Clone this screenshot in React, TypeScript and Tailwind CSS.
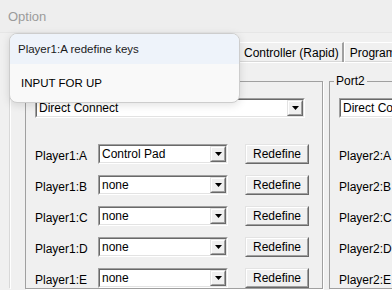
const ui = "font-['Liberation_Sans',Arial,sans-serif] text-[12px] leading-[14px] text-black"

function Arrow() {
  return (
    <div className="h-full w-[16px] shrink-0 border border-t-[#e3e3e3] border-l-[#e3e3e3] border-r-[#696969] border-b-[#696969]">
      <div className="flex h-full w-full items-center justify-center border border-t-white border-l-white border-r-[#a0a0a0] border-b-[#a0a0a0] bg-[#f0f0f0]">
        <svg width="7" height="4" viewBox="0 0 7 4">
          <polygon points="0,0 7,0 3.5,4" fill="#000" />
        </svg>
      </div>
    </div>
  )
}

function Combo({ value, className }: { value: string; className: string }) {
  return (
    <div className={`flex h-5 shrink-0 border border-t-[#a0a0a0] border-l-[#a0a0a0] border-r-white border-b-white ${className}`}>
      <div className="flex min-w-0 flex-1 items-center border border-t-[#696969] border-l-[#696969] border-r-[#e3e3e3] border-b-[#e3e3e3] bg-white">
        <span className="flex-1 truncate pl-[2px]">{value}</span>
        <Arrow />
      </div>
    </div>
  )
}

function Button({ label }: { label: string }) {
  return (
    <div className="h-5 w-16 shrink-0 border border-t-[#e3e3e3] border-l-[#e3e3e3] border-r-[#696969] border-b-[#696969]">
      <div className="flex h-full w-full items-center justify-center border border-t-white border-l-white border-r-[#a0a0a0] border-b-[#a0a0a0] bg-[#f0f0f0]">
        {label}
      </div>
    </div>
  )
}

function Port({ n }: { n: number }) {
  const rows = ["A", "B", "C", "D", "E"]
  return (
    <fieldset className="w-[298px] shrink-0 border border-[#a0a0a0] pl-[9px] pt-[10px] shadow-[1px_1px_0_#fff]">
      <legend className={`-ml-[5px] px-[2px] ${n === 1 ? "invisible" : ""}`}>Port{n}</legend>
      <Combo value="Direct Connect" className="w-[270px]" />
      <div className="mt-[26px] flex flex-col gap-[11px]">
        {rows.map((r, i) => (
          <div key={r} className="flex items-center">
            <span className="w-[63px] shrink-0 whitespace-nowrap pt-[3px]">
              Player{n}:{r}
            </span>
            <Combo value={n === 1 && i === 0 ? "Control Pad" : "none"} className="w-[130px]" />
            <div className="ml-[17px]">
              <Button label="Redefine" />
            </div>
          </div>
        ))}
      </div>
    </fieldset>
  )
}

export default function App() {
  return (
    <div className={`relative h-[290px] w-[392px] overflow-hidden bg-[#f0f0f0] ${ui}`}>
      <div className="h-[33px] border-b border-[#e6e6e6] bg-[#eeeeee] pl-2 pt-[10px] text-[13px] text-[#9b9b9b]">
        Option
      </div>

      <div className="ml-[10px] mt-[9px]">
        <div className="flex h-5 whitespace-nowrap">
          <div className="w-[232px] shrink-0 border-l border-t border-white" />
          <div className="flex shrink-0 items-center border-t border-white border-r-2 border-r-[#a0a0a0] pl-[2px] pr-[3px]">
            Controller (Rapid)
          </div>
          <div className="flex shrink-0 items-center border-l border-t border-white px-[5px]">Program Settings</div>
        </div>
        <div className="flex w-[460px] gap-[6px] border-l border-t border-white pl-[14px] pt-[11px] shadow-[-1px_-1px_0_#d8d8d8]">
          <Port n={1} />
          <Port n={2} />
        </div>
      </div>

      <div className="absolute left-[9px] top-[33px] h-[70px] w-[231px] overflow-hidden rounded-lg border border-[#cdcdcd] bg-[#f9f9f9] shadow-[0_2px_8px_rgba(0,0,0,0.12)]">
        <div className="flex h-[30px] items-center bg-[#eef3fa] pl-2 text-[11.5px] text-[#1a1a1a]">
          Player1:A redefine keys
        </div>
        <div className="flex h-[38px] items-center pl-[11px] text-[11.5px]">INPUT FOR UP</div>
      </div>
    </div>
  )
}
